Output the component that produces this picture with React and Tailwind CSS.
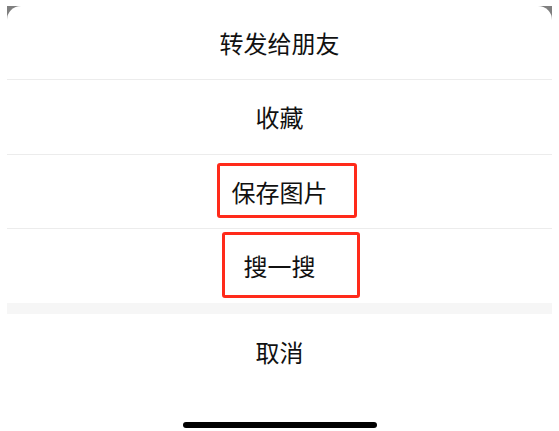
const ROWS = [
  { label: '转发给朋友', h: 'h-[74px]' },
  { label: '收藏', h: 'h-[75px]' },
  { label: '保存图片', h: 'h-[74px]' },
]

export default function App() {
  return (
    <div
      className="w-[559px] h-[431px] bg-white px-[7px] pt-[6px] overflow-hidden"
      style={{ fontFamily: '"Noto Sans CJK SC", "Noto Sans", sans-serif' }}
    >
      <div className="h-full bg-[#7f7f7f]">
        <div className="relative h-full bg-white rounded-t-[14px] flex flex-col text-[#111] text-[24px] leading-none">
          {ROWS.map((r) => (
            <div key={r.label} className={`${r.h} flex items-center justify-center border-b border-[#ececec]`}>
              {r.label}
            </div>
          ))}
          <div className="h-[74px] flex items-center justify-center">搜一搜</div>
          <div className="h-[11px] bg-[#f6f6f6]" />
          <div className="h-[76px] flex items-center justify-center">取消</div>
          <div className="flex-1 flex justify-center">
            <div className="mt-[32px] w-[194px] h-[6px] rounded-full bg-black" />
          </div>

          {/* annotation boxes */}
          <div className="absolute left-[210px] top-[157px] w-[140px] h-[55px] border-[3px] border-[#ff2a1a] rounded-[3px]" />
          <div className="absolute left-[215px] top-[226px] w-[138px] h-[66px] border-[3px] border-[#ff2a1a] rounded-[3px]" />
        </div>
      </div>
    </div>
  )
}
